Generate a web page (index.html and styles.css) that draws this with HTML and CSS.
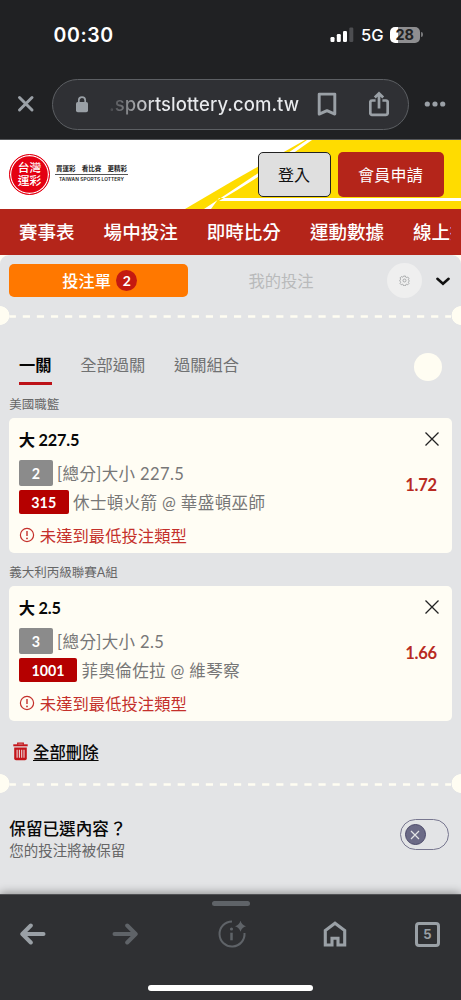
FILE: index.html
```html
<!DOCTYPE html>
<html lang="zh-Hant">
<head>
<meta charset="utf-8">
<meta name="viewport" content="width=device-width, initial-scale=1">
<title>台灣運彩</title>
<link rel="stylesheet" href="styles.css">
</head>
<body>
<div class="phone">
  <div class="status">
    <span class="time">00:30</span>
    <div class="status-right">
      <svg class="signal" width="24" height="16" viewBox="0 0 24 16"><g fill="#fff"><rect x="0.5" y="10" width="4" height="5" rx="1.2"/><rect x="6.8" y="7" width="4" height="8" rx="1.2"/><rect x="13" y="4" width="4" height="11" rx="1.2"/></g><rect x="19.3" y="0.5" width="4" height="14.5" rx="1.2" fill="#4d4e51"/></svg>
      <span class="net">5G</span>
      <span class="battery">28</span><i class="battery-cap"></i>
    </div>
  </div>
  <div class="toolbar">
    <svg class="tb-close" width="18" height="18" viewBox="0 0 18 18"><path d="M2.500 2.500l12.500 12.500M15 2.500L2.500 15" stroke="#9aa0a6" stroke-width="3" stroke-linecap="round"/></svg>
    <div class="url">
      <svg class="lock" width="14" height="17" viewBox="0 0 14 17"><rect x="1" y="6" width="12" height="10.3" rx="1.8" fill="#9aa0a6"/><path d="M3.8 7V4.3a3.2 3.2 0 0 1 6.4 0V7" fill="none" stroke="#9aa0a6" stroke-width="1.7"/></svg>
      <span class="url-text">.sportslottery.com.tw</span>
      <svg class="bookmark" width="20" height="24" viewBox="0 0 20 24"><path d="M2.2 2.100h15.6v20L10 18.600l-7.8 3.5z" fill="none" stroke="#9aa0a6" stroke-width="2.9" stroke-linejoin="round"/></svg>
      <svg class="share" width="20" height="26" viewBox="0 0 20 26"><path d="M6.600 9.500H3a1.700 1.700 0 0 0-1.700 1.700v10.900A1.700 1.700 0 0 0 3 23.800h14a1.700 1.700 0 0 0 1.700-1.700V11.200A1.700 1.700 0 0 0 17 9.500h-3.600M10 17.500V3M5.800 6.500L10 2.300l4.200 4.200" fill="none" stroke="#9aa0a6" stroke-width="2.700"/></svg>
    </div>
    <svg class="more" width="22" height="6" viewBox="0 0 22 6" fill="#9aa0a6"><circle cx="3.300" cy="3" r="2.600"/><circle cx="11" cy="3" r="2.600"/><circle cx="18.700" cy="3" r="2.600"/></svg>
  </div>

  <header class="site-head">
    <svg class="head-art" width="461" height="69" viewBox="0 0 461 69"><path d="M185 69L231 42L305 0H461V69z" fill="#ffdc00"/><path d="M204 69Q250 39 307 0H312Q265 34 219 61H461V58H219L211 69z" fill="#fff"/></svg>
    <div class="brand">
      <div class="seal"><span>台灣</span><span>運彩</span></div>
      <div class="slogan"><div class="slogan-zh"><span>買運彩</span><span>看比賽</span><span>更精彩</span></div><div class="slogan-en">TAIWAN SPORTS LOTTERY</div></div>
    </div>
    <div class="auth"><button class="btn login">登入</button><button class="btn join">會員申請</button></div>
  </header>
  <nav class="nav"><div class="nav-inner"><a>賽事表</a><a>場中投注</a><a>即時比分</a><a>運動數據</a><a>線上投注</a></div></nav>

  <main class="slip-wrap"><div class="slip">
    <div class="slip-tabs">
      <div class="tab-active">投注單<b class="count">2</b></div>
      <div class="tab-idle">我的投注</div>
      <div class="gear"><svg width="11" height="11" viewBox="-1 -1 26 26" fill="none" stroke="#9d9fa0" stroke-width="2"><circle cx="12" cy="12" r="3.500"/><path d="M9.700 1.500h4.600l.8 2.800 1.800.8 2.600-1.300 3 3-1.400 2.600.7 1.900 1.200.7v2l-1.200.7-.7 1.900 1.400 2.600-3 3-2.600-1.300-1.800.8-.8 2.800H9.700l-.8-2.800-1.800-.8-2.600 1.300-3-3 1.400-2.600-.7-1.900L1 13v-2l1.200-.7.7-1.900-1.400-2.600 3-3 2.600 1.300 1.800-.8z" stroke-linejoin="round"/></svg></div>
      <svg class="chev" width="14" height="9" viewBox="0 0 14 9"><path d="M1.400 1.800L7 6.800l5.600-5" fill="none" stroke="#111" stroke-width="2.500" stroke-linecap="round"/></svg>
    </div>
    <div class="perf"><svg width="461" height="3"><path d="M9.300 1.500H451" stroke="#fffdf2" stroke-width="2.500" stroke-dasharray="7.200 6.880" stroke-dashoffset="0.600"/></svg></div>
    <div class="modes"><span class="mode on">一關</span><span class="mode">全部過關</span><span class="mode">過關組合</span><i class="dot"></i></div>

    <div class="league first">美國職籃</div>
    <section class="card">
      <div class="pick"><span>大 227.5</span><svg width="16" height="16" viewBox="0 0 16 16"><path d="M1.500 1.500l13 13M14.500 1.500l-13 13" stroke="#222" stroke-width="1.300"/></svg></div>
      <div class="detail"><div>
        <div class="line"><b class="tag gray">2</b><span>[總分]大小 227.5</span></div>
        <div class="line second"><b class="tag red">315</b><span>休士頓火箭 @ 華盛頓巫師</span></div></div>
        <span class="odds">1.72</span>
      </div>
      <div class="warn"><svg width="16" height="16" viewBox="0 0 16 16"><circle cx="8" cy="8" r="6.600" fill="none" stroke="#c4302b" stroke-width="1.200"/><path d="M8 4v5" stroke="#c4302b" stroke-width="1.400"/><circle cx="8" cy="11.400" r=".9" fill="#c4302b"/></svg>未達到最低投注類型</div>
    </section>
    <div class="league">義大利丙級聯賽A組</div>
    <section class="card">
      <div class="pick"><span>大 2.5</span><svg width="16" height="16" viewBox="0 0 16 16"><path d="M1.500 1.500l13 13M14.500 1.500l-13 13" stroke="#222" stroke-width="1.300"/></svg></div>
      <div class="detail"><div>
        <div class="line"><b class="tag gray">3</b><span>[總分]大小 2.5</span></div>
        <div class="line second"><b class="tag red wide">1001</b><span>菲奧倫佐拉 @ 維琴察</span></div></div>
        <span class="odds">1.66</span>
      </div>
      <div class="warn"><svg width="16" height="16" viewBox="0 0 16 16"><circle cx="8" cy="8" r="6.600" fill="none" stroke="#c4302b" stroke-width="1.200"/><path d="M8 4v5" stroke="#c4302b" stroke-width="1.400"/><circle cx="8" cy="11.400" r=".9" fill="#c4302b"/></svg>未達到最低投注類型</div>
    </section>
    <div class="clear"><svg width="15" height="19" viewBox="0 0 15 19"><path d="M4.700 2.700V1.200h5.600v1.500" fill="none" stroke="#c4141a" stroke-width="1.200"/><path d="M.3 2.300h14.400v2H.3z" fill="#c4141a"/><path d="M1.200 5.600h12.600V16.500a1.800 1.800 0 0 1-1.800 1.800H3a1.800 1.800 0 0 1-1.800-1.800z" fill="#c4141a"/><path d="M4.100 7.700v8M6.400 7.700v8M8.700 7.700v8M11 7.700v8" stroke="#ead8d9" stroke-width="1.100"/></svg><a>全部刪除</a></div>
    <div class="perf"><svg width="461" height="3"><path d="M9.300 1.500H451" stroke="#fffdf2" stroke-width="2.500" stroke-dasharray="7.200 6.880" stroke-dashoffset="0.600"/></svg></div>
    <div class="keep"><div><div class="keep-title">保留已選內容<span class="qmark">？</span></div><div class="keep-sub">您的投注將被保留</div></div>
      <div class="toggle"><i><svg width="10" height="10" viewBox="0 0 10 10"><path d="M1 1l8 8M9 1L1 9" stroke="#e3e4e6" stroke-width="1.200"/></svg></i></div></div>
  </div></main>

  <footer class="bottom">
    <div class="grip"></div>
    <div class="actions">
      <svg width="26" height="22" viewBox="0 0 26 22"><path d="M23.500 11H2.500M10.800 2.500L2.300 11l8.500 8.500" fill="none" stroke="#9aa0a6" stroke-width="4" stroke-linecap="round" stroke-linejoin="round"/></svg>
      <svg class="forward" width="26" height="22" viewBox="0 0 26 22"><path d="M2.500 11h21M15.200 2.500l8.500 8.500-8.500 8.500" fill="none" stroke="#5f6368" stroke-width="4" stroke-linecap="round" stroke-linejoin="round"/></svg>
      <svg class="info" width="30" height="28" viewBox="0 0 30 28"><path d="M15 1.500A12.500 12.500 0 1 0 27.500 13" fill="none" stroke="#5f6368" stroke-width="2"/><path d="M14.500 12.700v7.600" stroke="#5f6368" stroke-width="2.500"/><circle cx="14.500" cy="9" r="1.600" fill="#5f6368"/><path d="M23.500 .8q1.300 4.200 5.500 5.500-4.200 1.300-5.500 5.500-1.300-4.200-5.500-5.500Q22.200 5 23.500 .8z" fill="#5f6368"/></svg>
      <svg class="home" width="24" height="26" viewBox="0 0 24 26"><path d="M2.300 24V9.600L12 2.300l9.700 7.300V24H15v-6.700H9V24z" fill="none" stroke="#9aa0a6" stroke-width="3.100"/></svg>
      <div class="tabs">5</div>
    </div>
    <div class="home-bar"></div>
  </footer>
</div>
</body>
</html>
```
FILE: styles.css
```css
* { box-sizing: border-box; }
body { margin: 0; font-family: Lato, "Noto Sans CJK TC", sans-serif; background: #202124; }
svg { display: block; flex: none; }
.phone { width: 461px; height: 1000px; overflow: hidden; display: flex; flex-direction: column; }

.status { height: 69px; flex: none; background: #202123; color: #fff; display: flex; justify-content: space-between; align-items: center; padding: 0 38.500px 0 53.500px; font-family: Inter, sans-serif; }
.time { font-size: 19.500px; font-weight: 600; letter-spacing: .6px; }
.status-right { display: flex; align-items: center; }
.net { font-size: 16.500px; font-weight: 500; margin-left: 7px; width: 29px; }
.battery { width: 29.500px; height: 16px; border-radius: 5px; background: linear-gradient(90deg, #fff 28%, #8e8e90 28%); color: #222; font-size: 14.500px; font-weight: 700; line-height: 16px; text-align: center; }
.battery-cap { width: 2px; height: 5px; margin-left: 1px; border-radius: 0 2px 2px 0; background: #77787a; }

.toolbar { height: 71px; flex: none; background: #202123; border-bottom: 1px solid #55575a; display: flex; align-items: center; padding: 0 15px 0 17px; }
.url { width: 358px; height: 51px; margin: 0 15px 0 17px; border: 1px solid #5c5f63; border-radius: 26px; background: #2f3034; display: flex; align-items: center; padding-left: 22px; }
.url-text { margin-left: 20px; width: 208px; font: 500 18.500px Inter, sans-serif; letter-spacing: .05px; white-space: nowrap; background: linear-gradient(90deg, #8a8b8f33, #e8eaed 22%); background-clip: text; -webkit-background-clip: text; color: transparent; }
.share { margin-left: 32px; }

.site-head { position: relative; height: 69px; flex: none; background: #fff; display: flex; justify-content: space-between; padding: 12px 17.500px 0 9px; }
.head-art { position: absolute; left: 0; top: 0; }
.brand { position: relative; display: flex; align-items: flex-start; padding-top: 2px; }
.seal { width: 41px; height: 41px; border-radius: 50%; background: #e40012; border: 1px solid #e40012; box-shadow: inset 0 0 0 1.200px #fff; color: #fff; font-size: 11.800px; line-height: 12.500px; font-weight: 500; display: flex; flex-direction: column; align-items: center; justify-content: center; }
.seal span { height: 12.500px; }
.slogan { margin: 9px 0 0 5px; width: 73px; color: #222; }
.slogan-zh { display: flex; justify-content: space-between; font-size: 6.500px; font-weight: 700; line-height: 11px; height: 12px; padding: 0 1px; border-bottom: 1px solid #555; }
.slogan-en { font: 600 4.900px/9px Inter, sans-serif; text-align: center; white-space: nowrap; letter-spacing: .05px; }
.auth { position: relative; display: flex; gap: 7px; align-items: flex-start; }
.btn { height: 45px; border-radius: 5px; padding: 0 0 1px; font: 400 16px Lato, "Noto Sans CJK TC", sans-serif; }
.login { width: 73px; border: 1px solid #222; background: #dfdfdf; color: #111; }
.join { width: 106px; border: 0; background: #b4251a; color: #fff; letter-spacing: .3px; }

.nav { height: 45.500px; flex: none; background: #b4251a; padding: 0 10px 0 19px; }
.nav-inner { height: 43.500px; display: flex; align-items: center; gap: 29px; overflow: hidden; color: #fff; font-size: 18.550px; font-weight: 500; white-space: nowrap; }
.nav-inner a { flex: none; }

.slip-wrap { flex: 1; min-height: 0; background: #fffdf2; overflow: hidden; }
.slip { height: 640px; background: #e3e4e6; border-radius: 9px 9px 0 0; }
.slip-tabs { height: 51px; display: flex; align-items: center; padding: 0 11px 0 9.400px; }
.tab-active { width: 179px; height: 33px; border-radius: 5px; background: #ff7800; color: #fff; font-size: 16.200px; font-weight: 500; display: flex; align-items: center; justify-content: center; gap: 5.500px; padding-left: 2px; }
.count { width: 21px; height: 21px; border-radius: 50%; background: #c41a10; font-size: 14px; font-weight: 700; line-height: 21px; text-align: center; }
.tab-idle { margin-left: 60px; width: 138.500px; color: #b9babb; font-size: 16.300px; }
.gear { width: 35px; height: 35px; border-radius: 50%; background: #efefef; display: grid; place-items: center; }
.chev { margin-left: 14px; margin-top: 2px; }
.perf { height: 19px; display: flex; align-items: center; background: radial-gradient(circle at 0 50%, #fffdf2 9px, transparent 9.700px), radial-gradient(circle at 461px 50%, #fffdf2 9px, transparent 9.700px); }
.perf svg { margin-top: 2px; }
.modes { height: 60px; padding: 20px 19px 0; display: flex; gap: 28.600px; align-items: flex-start; color: #707172; font-size: 16.300px; line-height: 40px; }
.mode { height: 40px; }
.mode.on { color: #050505; font-weight: 700; border-bottom: 3.500px solid #bd1218; }
.dot { width: 28px; height: 28px; border-radius: 50%; background: #fffdf2; margin: 8px 0 0 auto; }
.league { height: 33px; padding: 0 9.200px; color: #666; font-size: 12.500px; line-height: 39px; }
.league.first { line-height: 40px; }
.card { height: 135px; margin: 0 9.500px 0 9.400px; background: #fffdf4; border-radius: 5px; padding: 8.500px 11.500px 0 9.400px; }
.pick { height: 25px; display: flex; align-items: center; justify-content: space-between; font-size: 16.300px; font-weight: 700; letter-spacing: -.2px; color: #080808; }
.detail { display: flex; justify-content: space-between; margin-top: 9px; padding-right: 3px; color: #777; font-size: 16.500px; }
.line { height: 26px; display: flex; align-items: center; gap: 4.300px; letter-spacing: .38px; white-space: nowrap; }
.line.second { margin-top: 2.500px; }
.tag { display: block; width: 34px; height: 26px; border-radius: 2px; background: #8b8b8b; color: #fff; font-size: 14.300px; line-height: 27px; letter-spacing: 0; text-align: center; }
.tag.red { width: 50px; height: 24px; line-height: 25px; background: #b50000; }
.tag.wide { width: 58.500px; }
.odds { color: #b82a22; font-weight: 700; font-size: 16.500px; letter-spacing: -.2px; line-height: 20px; margin-top: 14.500px; }
.warn { display: flex; align-items: center; gap: 5px; height: 24px; margin-top: 8px; color: #c4302b; font-size: 16.350px; }
.clear { height: 53px; display: flex; align-items: center; gap: 5px; padding: 7px 13px 0; color: #080808; font-size: 16.400px; font-weight: 500; }
.clear a { text-decoration: underline; text-decoration-thickness: 1px; text-underline-offset: 2px; }
.clear svg { margin-top: 1px; }
.keep { display: flex; justify-content: space-between; padding: 25.500px 12px 0 9.300px; }
.keep-title { font-size: 16.600px; line-height: 22px; font-weight: 500; color: #080808; }
.qmark { margin-left: 1px; }
.keep-sub { font-size: 14.500px; line-height: 22px; color: #666; }
.toggle { width: 49.500px; height: 31px; border: 1px solid #77768f; border-radius: 16px; margin-top: 1px; padding: 4px; }
.toggle i { width: 21px; height: 21px; border-radius: 50%; background: #6b6a86; border: 1px solid #4b4969; display: grid; place-items: center; }

.bottom { position: relative; height: 106px; flex: none; background: #2f3033; box-shadow: 0 -1px 9px #0006; border-top: 1px solid #505154; display: flex; flex-direction: column; align-items: center; }
.grip { width: 38px; height: 5px; border-radius: 3px; background: #5f6368; margin-top: 6px; }
.actions { width: 461px; height: 56px; display: flex; align-items: center; padding: 0 19.500px; }
.forward { margin-left: 66.500px; }
.info { margin-left: 78.500px; }
.home { margin-left: 76.500px; }
.tabs { width: 25px; height: 25px; margin-left: 68px; border: 3px solid #9aa0a6; border-radius: 4px; color: #9aa0a6; font: 700 13px/19px Inter, sans-serif; text-align: center; }
.home-bar { width: 165px; height: 6px; border-radius: 3px; background: #fff; margin-top: 23px; }
```
